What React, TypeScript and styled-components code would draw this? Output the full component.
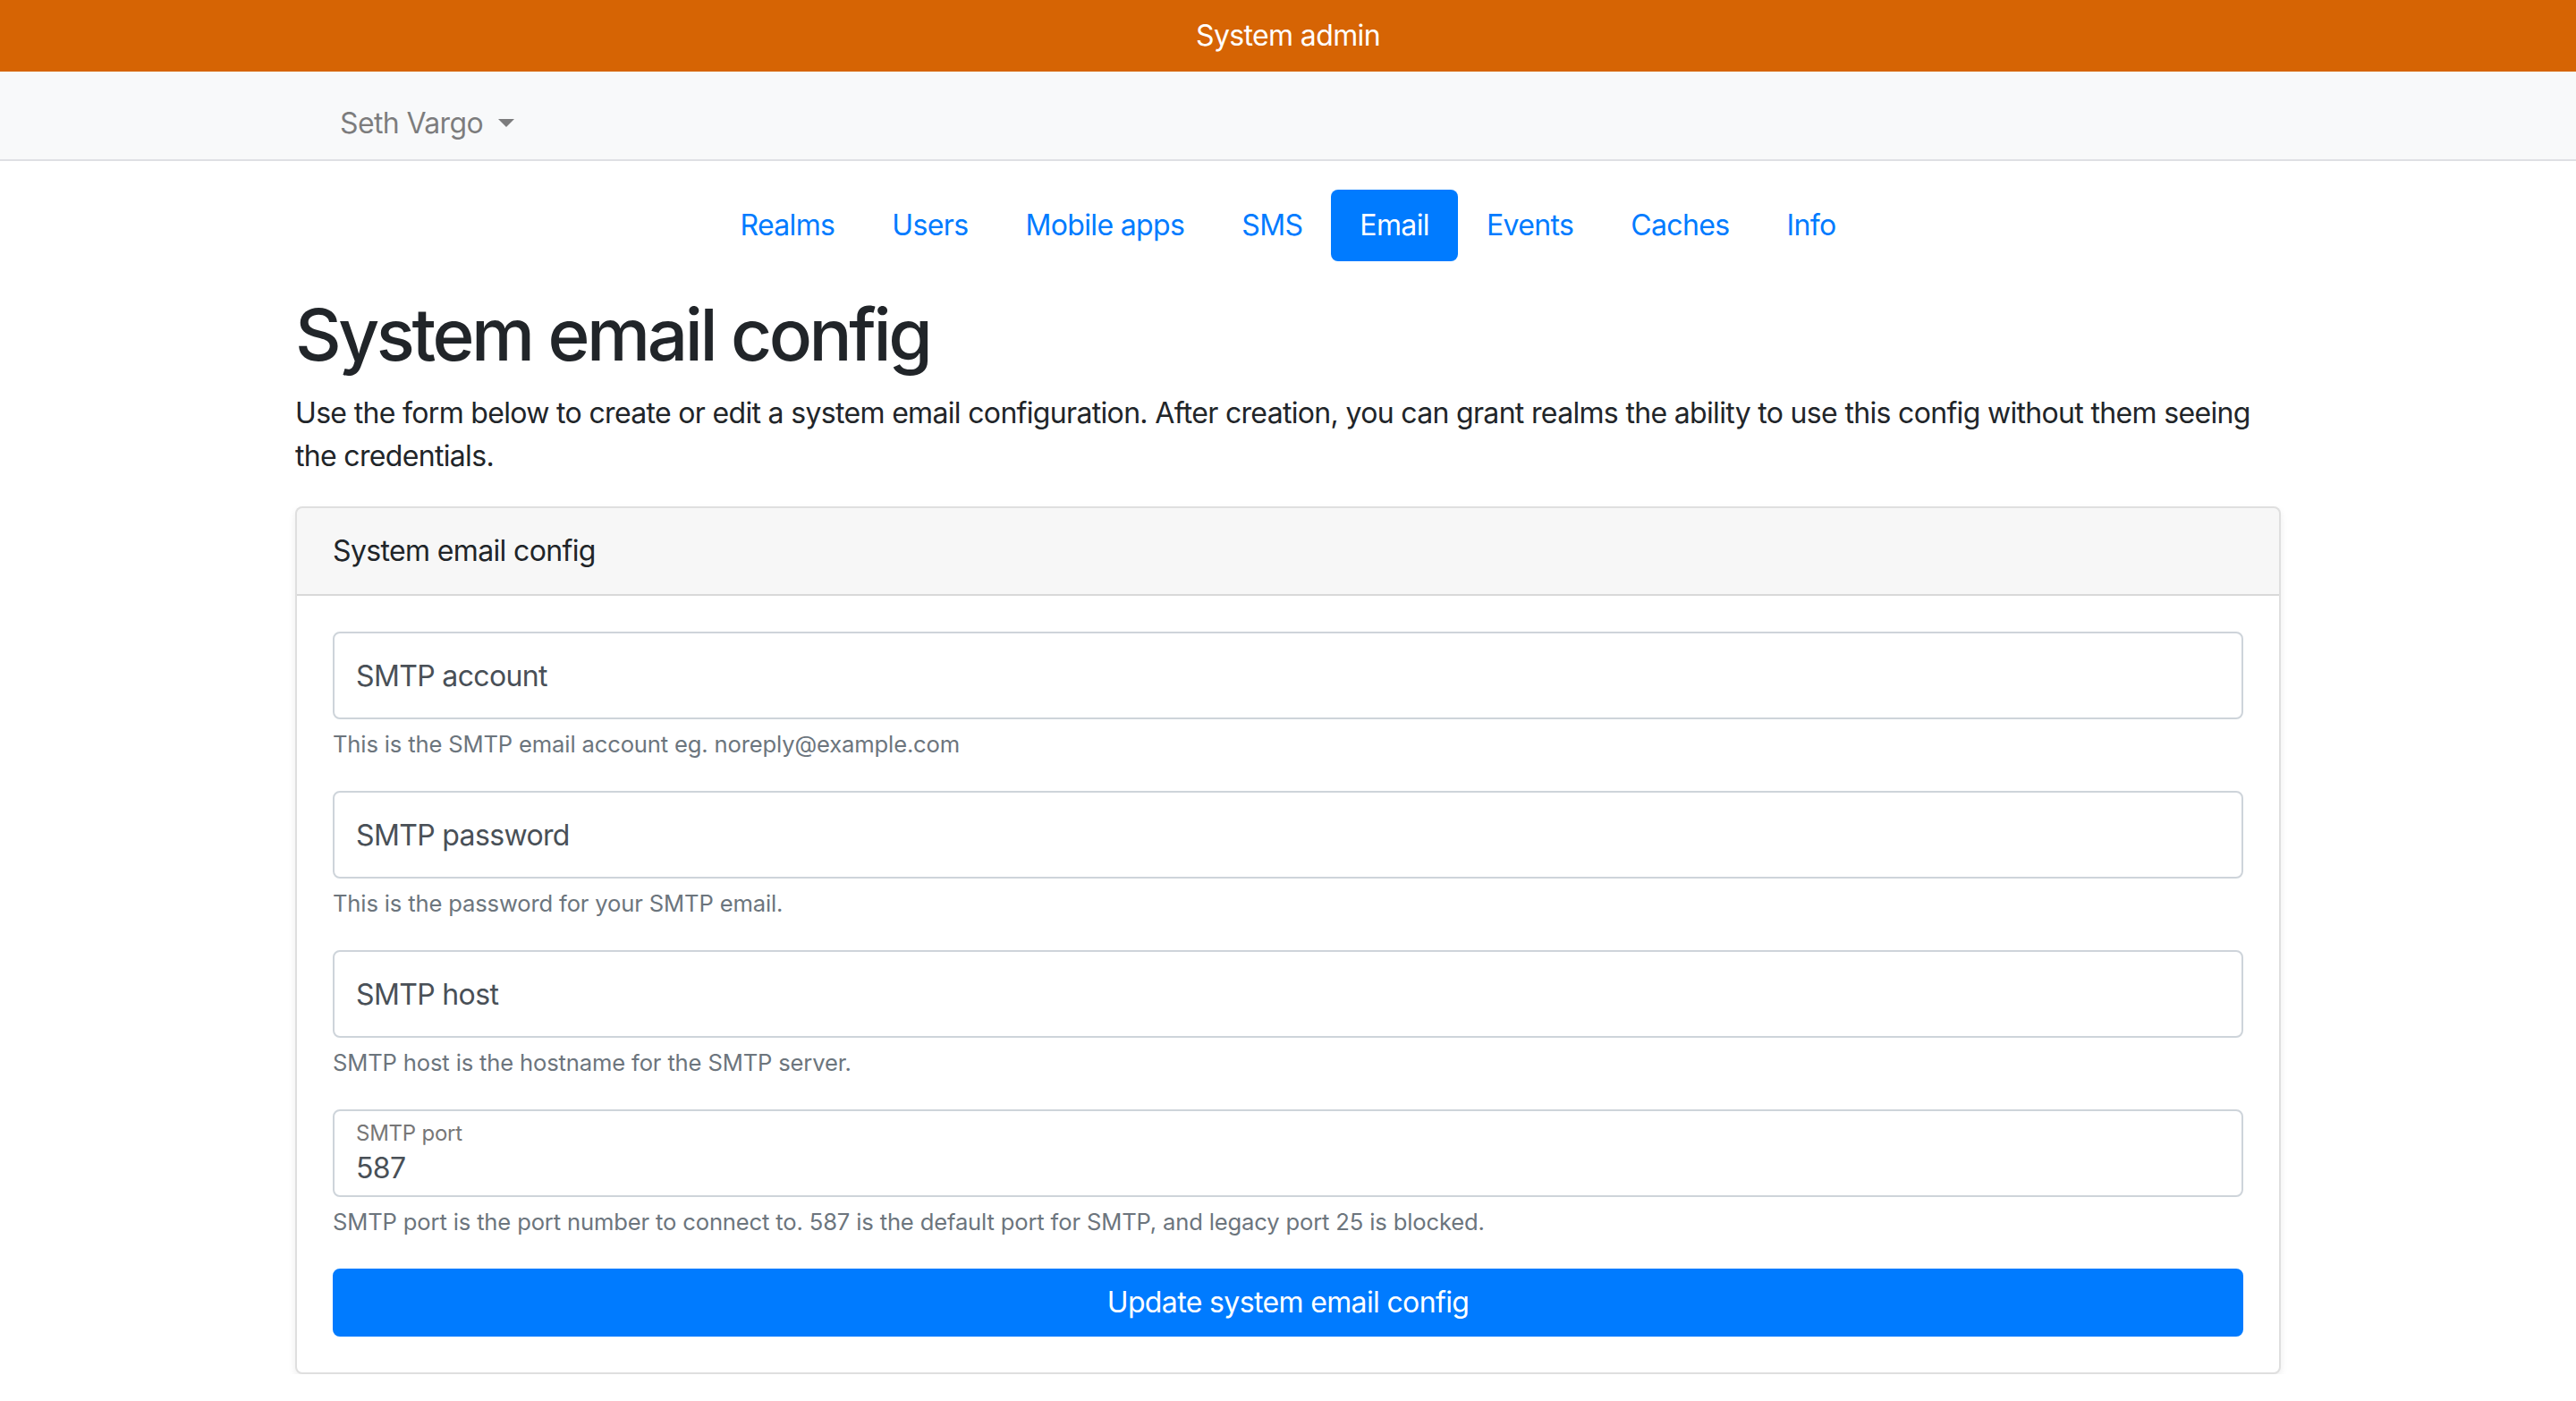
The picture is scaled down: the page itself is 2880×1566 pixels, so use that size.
import React from "react";
import styled, { createGlobalStyle } from "styled-components";

const GlobalStyle = createGlobalStyle`
  *, *::before, *::after { box-sizing: border-box; }
  html, body { margin: 0; padding: 0; background: #ffffff; }
  body {
    font-family: Inter, "Noto Sans", "Liberation Sans", sans-serif;
    color: #212529;
    font-size: 32px;
    line-height: 48px;
    letter-spacing: -0.64px;
    -webkit-font-smoothing: antialiased;
  }
`;

const TopBar = styled.header`
  height: 80px;
  background: #d66404;
  color: #ffffff;
  display: flex;
  align-items: center;
  justify-content: center;
  font-size: 32px;
  line-height: 48px;
  letter-spacing: -0.02em;
`;

const NavBar = styled.nav`
  background: #f8f9fa;
  border-bottom: 2px solid #dfe0e4;
`;

const Container = styled.div`
  width: 2220px;
  margin: 0 auto;
`;

const NavBarInner = styled(Container)`
  display: flex;
  align-items: center;
  padding: 34px 0 16px 50px;
`;

const UserMenu = styled.span`
  color: rgba(0, 0, 0, 0.5);
  font-size: 32px;
  line-height: 48px;
  letter-spacing: -0.02em;
  display: inline-flex;
  align-items: center;
  cursor: pointer;

  &::after {
    content: "";
    display: inline-block;
    margin-left: 17px;
    margin-top: -2px;
    border-top: 9.6px solid rgba(0, 0, 0, 0.5);
    border-left: 9.6px solid transparent;
    border-right: 9.6px solid transparent;
  }
`;

const Tabs = styled.ul`
  display: flex;
  justify-content: center;
  list-style: none;
  margin: 32px 0 0;
  padding: 0;
`;

const Tab = styled.a<{ $active?: boolean }>`
  display: block;
  padding: 16px 32px;
  font-size: 32px;
  line-height: 48px;
  letter-spacing: -0.02em;
  border-radius: 8px;
  text-decoration: none;
  color: ${(p) => (p.$active ? "#ffffff" : "#007bff")};
  background: ${(p) => (p.$active ? "#007bff" : "transparent")};
  cursor: pointer;
`;

const Heading = styled.h1`
  margin: 34px 0 16px;
  font-size: 80px;
  line-height: 96px;
  font-weight: 500;
  letter-spacing: -0.043em;
  color: #212529;
`;

const Lead = styled.p`
  margin: 0 0 32px;
  font-size: 32px;
  line-height: 48px;
  letter-spacing: -0.021em;
`;

const Card = styled.section`
  border: 2px solid rgba(0, 0, 0, 0.125);
  border-radius: 8px;
  box-shadow: 0 4px 8px rgba(0, 0, 0, 0.075);
  background: #ffffff;
  overflow: hidden;
`;

const CardHeader = styled.div`
  padding: 24px 40px;
  background: rgba(0, 0, 0, 0.03);
  border-bottom: 2px solid rgba(0, 0, 0, 0.125);
  font-size: 32px;
  line-height: 48px;
  letter-spacing: -0.02em;
`;

const CardBody = styled.form`
  padding: 40px;
`;

const FieldGroup = styled.div`
  margin-bottom: 32px;
`;

const FieldWrap = styled.div`
  position: relative;
`;

const Input = styled.input<{ $filled?: boolean }>`
  display: block;
  width: 100%;
  height: 98px;
  padding: ${(p) => (p.$filled ? "39px 24px 7px" : "0 24px")};
  font-family: inherit;
  font-size: 32px;
  line-height: 48px;
  letter-spacing: -0.02em;
  color: #495057;
  background: #ffffff;
  border: 2px solid #ced4da;
  border-radius: 8px;
  outline: none;

  &::placeholder {
    color: #495057;
    opacity: 1;
  }
`;

const FloatLabel = styled.label`
  position: absolute;
  top: 9px;
  left: 26px;
  font-size: 24px;
  line-height: 36px;
  letter-spacing: -0.01em;
  color: #777777;
  pointer-events: none;
`;

const Help = styled.small`
  display: block;
  margin-top: 8px;
  font-size: 25.6px;
  line-height: 40px;
  letter-spacing: -0.006em;
  color: #6c757d;
`;

const SubmitButton = styled.button`
  display: block;
  width: 100%;
  height: 76px;
  padding: 12px 24px;
  font-family: inherit;
  font-size: 32px;
  line-height: 48px;
  letter-spacing: -0.02em;
  color: #ffffff;
  background: #007bff;
  border: 2px solid #007bff;
  border-radius: 8px;
  cursor: pointer;
`;

const tabs = ["Realms", "Users", "Mobile apps", "SMS", "Email", "Events", "Caches", "Info"];

type Field = { name: string; label: string; help: string; value?: string; type?: string };

const fields: Field[] = [
  { name: "smtp_account", label: "SMTP account", help: "This is the SMTP email account eg. noreply@example.com" },
  { name: "smtp_password", label: "SMTP password", help: "This is the password for your SMTP email.", type: "password" },
  { name: "smtp_host", label: "SMTP host", help: "SMTP host is the hostname for the SMTP server." },
  {
    name: "smtp_port",
    label: "SMTP port",
    value: "587",
    help: "SMTP port is the port number to connect to. 587 is the default port for SMTP, and legacy port 25 is blocked.",
  },
];

export default function App() {
  return (
    <>
      <GlobalStyle />
      <TopBar>System admin</TopBar>
      <NavBar>
        <NavBarInner>
          <UserMenu>Seth Vargo</UserMenu>
        </NavBarInner>
      </NavBar>
      <Container>
        <Tabs>
          {tabs.map((t) => (
            <li key={t}>
              <Tab $active={t === "Email"}>{t}</Tab>
            </li>
          ))}
        </Tabs>
        <Heading>System email config</Heading>
        <Lead>
          Use the form below to create or edit a system email configuration. After creation, you can grant realms the
          ability to use this config without them seeing the credentials.
        </Lead>
        <Card>
          <CardHeader>System email config</CardHeader>
          <CardBody onSubmit={(e) => e.preventDefault()}>
            {fields.map((f) => (
              <FieldGroup key={f.name}>
                <FieldWrap>
                  {f.value ? (
                    <>
                      <Input id={f.name} $filled defaultValue={f.value} type={f.type || "text"} />
                      <FloatLabel htmlFor={f.name}>{f.label}</FloatLabel>
                    </>
                  ) : (
                    <Input id={f.name} placeholder={f.label} type={f.type || "text"} />
                  )}
                </FieldWrap>
                <Help>{f.help}</Help>
              </FieldGroup>
            ))}
            <SubmitButton type="submit">Update system email config</SubmitButton>
          </CardBody>
        </Card>
      </Container>
    </>
  );
}
